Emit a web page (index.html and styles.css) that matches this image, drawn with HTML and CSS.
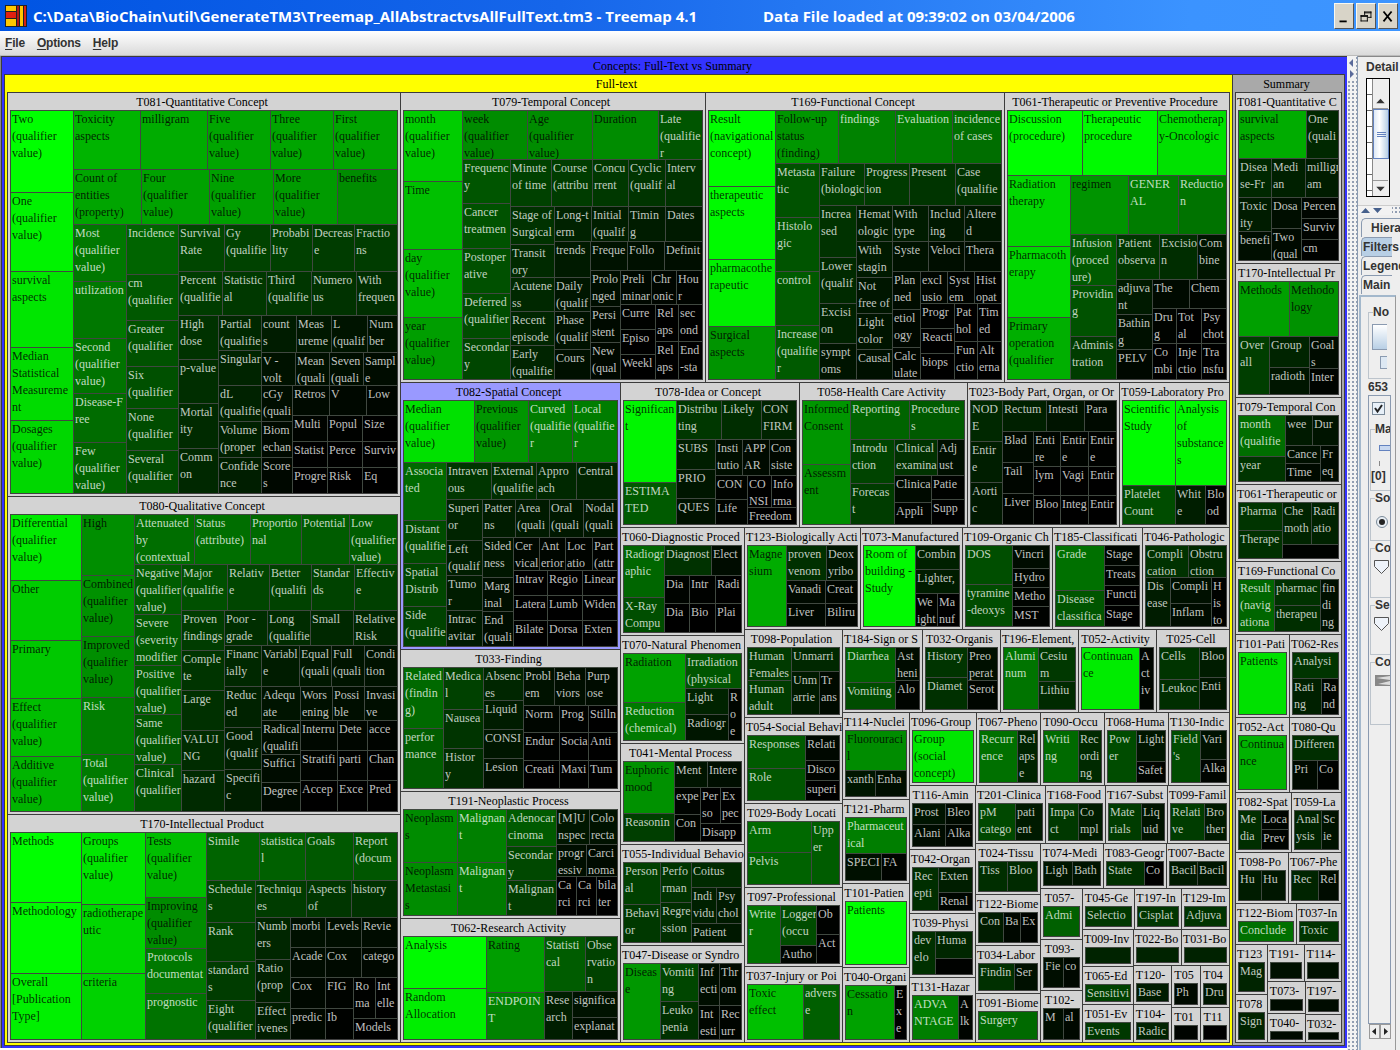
FILE: index.html
```html
<!DOCTYPE html>
<html lang="en">
<head>
<meta charset="utf-8">
<title>Treemap 4.1</title>
<link rel="stylesheet" href="styles.css">
</head>
<body>
<header class="titlebar">
  <svg class="logo" width="22" height="22" viewBox="0 0 22 22">
    <rect width="22" height="22" fill="#222"/>
    <rect x="1" y="1" width="10" height="5" fill="#ffc800"/><rect x="1" y="7" width="10" height="6" fill="#e02010"/><rect x="1" y="14" width="10" height="7" fill="#ffc800"/>
    <rect x="12" y="1" width="2" height="20" fill="#b01818"/>
    <rect x="15" y="1" width="3" height="20" fill="#ffc800"/><rect x="19" y="1" width="2" height="20" fill="#d82010"/>
  </svg>
  <span class="path">C:\Data\BioChain\util\GenerateTM3\Treemap_AllAbstractvsAllFullText.tm3 - Treemap 4.1</span>
  <span class="loaded">Data File loaded at 09:39:02 on 03/04/2006</span>
  <div class="winbtns">
    <svg width="20" height="26" viewBox="0 0 20 26"><path d="M5 19h8" stroke="#000" stroke-width="2"/></svg>
    <svg width="20" height="26" viewBox="0 0 20 26"><path d="M8 8.500h8M8 9.500h8M8.500 8v4M15.500 8v7M12 14.500h4M4 12.500h8M4 13.500h8M4.500 12v7M11.500 12v7M4 18.500h8" stroke="#000" fill="none"/></svg>
    <svg width="20" height="26" viewBox="0 0 20 26"><path d="M5 8l9 11M14 8l-9 11" stroke="#000" stroke-width="2"/></svg>
  </div>
</header>
<nav class="menubar"><span><u>F</u>ile</span><span><u>O</u>ptions</span><span><u>H</u>elp</span></nav>
<main class="workspace">
  <div class="treemap" id="treemap"></div>
  <div class="divider">
    <svg width="9" height="24" viewBox="0 0 9 24"><path d="M6 2v8L2 6zM3 13v8l4-4z" fill="#5a6a9a"/></svg>
  </div>
  <aside class="side">
    <section class="details">
      <div class="label">Detail</div>
      <div class="table">
        <div class="rows"><i></i><i></i><i></i><i></i><i></i><i></i><i></i></div>
        <div class="vscroll">
          <svg width="15" height="15" viewBox="0 0 15 15"><path d="M3 10h9L7.500 5z" fill="#333"/></svg>
          <div class="thumb"><i></i><i></i><i></i></div>
          <div class="track"></div>
          <svg class="down" width="15" height="16" viewBox="0 0 15 16"><path d="M3 6h9l-4.500 5z" fill="#333"/></svg>
        </div>
      </div>
    </section>
    <div class="hdivider"><svg width="34" height="9" viewBox="0 0 34 9"><path d="M3 7h9L7.500 2zM15 2h9l-4.500 5z" fill="#46608c"/></svg></div>
    <div class="tabs">
      <div class="tab t1">Hiera</div><div class="tab on">Filters</div><div class="tab">Legend</div><div class="tab">Main</div>
    </div>
    <section class="filters">
      <fieldset class="f-no"><legend>No</legend><div class="bigbox"></div><div class="smallbox"></div></fieldset>
      <div class="count">653</div>
      <div class="pane">
        <svg class="check" width="13" height="13" viewBox="0 0 13 13"><rect x=".5" y=".5" width="12" height="12" fill="#e8f0f8" stroke="#7a8a99"/><path d="M3 6l2.500 3.500L10 3" fill="none" stroke="#222" stroke-width="2"/></svg>
        <fieldset class="f-ma"><legend>Ma</legend><div class="slider"></div><div class="tick"></div><b>[0]</b></fieldset>
        <fieldset class="f-so"><legend>So</legend><svg width="14" height="14" viewBox="0 0 14 14"><circle cx="7" cy="7" r="5.500" fill="#e8eef4" stroke="#7a8a99"/><circle cx="7" cy="7" r="3" fill="#222"/></svg></fieldset>
        <fieldset class="f-co"><legend>Co</legend><svg width="17" height="16" viewBox="0 0 17 16"><path d="M1.500 1.500h14v6l-7 7-7-7z" fill="#eef3fa" stroke="#555"/></svg></fieldset>
        <fieldset class="f-co"><legend>Se</legend><svg width="17" height="16" viewBox="0 0 17 16"><path d="M1.500 1.500h14v6l-7 7-7-7z" fill="#eef3fa" stroke="#555"/></svg></fieldset>
        <fieldset class="f-last"><legend>Co</legend><svg width="15" height="12" viewBox="0 0 15 12"><rect width="15" height="11" fill="#888"/><path d="M1 3l14-2v4zM3 9l12-3v4z" fill="#ddd"/></svg></fieldset>
      </div>
      <div class="hscroll">
        <svg width="11" height="15" viewBox="0 0 11 15"><rect x=".5" y=".5" width="10" height="14" fill="#eee" stroke="#999"/><path d="M7 4v7L3 7.500z" fill="#222"/></svg>
        <svg width="11" height="15" viewBox="0 0 11 15"><rect x=".5" y=".5" width="10" height="14" fill="#eee" stroke="#999"/><path d="M4 4v7l4-3.500z" fill="#222"/></svg>
      </div>
    </section>
  </aside>
</main>
<script src="treemap.js"></script>
</body>
</html>
```
FILE: styles.css
```css
* { box-sizing: border-box; }
body { margin: 0; width: 1400px; height: 1050px; overflow: hidden; background: #fff; display: flex; flex-direction: column; font: bold 12px/16px "Liberation Sans", sans-serif; color: #333; }

.titlebar { height: 31px; flex: none; display: flex; align-items: center; padding-left: 5px; background: linear-gradient(90deg, #0054e3, #1666ea 40%, #3b93ff 85%, #3d95ff); color: #fff; font: 700 15px/30px "Open Sans", sans-serif; white-space: pre; }
.logo { flex: none; margin-right: 6px; }
.path { width: 730px; flex: none; }
.loaded { flex: 1; }
.winbtns { display: flex; gap: 2px; margin-right: 2px; }
.winbtns svg { background: #d8d4c8; border: 1px solid #f8f8f0; border-right-color: #555; border-bottom-color: #555; }

.menubar { height: 25px; flex: none; display: flex; gap: 12px; padding: 4px 0 0 5px; background: linear-gradient(#fff, #dadada); border-bottom: 1px solid #bbb; letter-spacing: -.2px; }
.menubar u { text-underline-offset: 2px; }

.workspace { flex: 1; display: flex; min-height: 0; }

.treemap { width: 1347px; height: 992px; flex: none; padding-left: 1px; display: flex; background: #888; font: 12px/17px "Liberation Serif", serif; color: #000; }
.split { display: flex; min-width: 0; min-height: 0; overflow: hidden; }
.row { flex-direction: row; }
.col { flex-direction: column; }
.group { min-width: 0; min-height: 0; overflow: hidden; display: flex; flex-direction: column; border: solid #3c3c3c; border-width: 1px 0 0 1px; padding: 0 2px 2px 2px; background: #d3d3d3; }
.group.root { background: #3333ff; }
.group.yellow { background: #ffff00; }
.group.gray { background: #a9a9a9; }
.group.selected { background: #9999ff; }
.title { height: 17px; flex: none; margin: 0 -2px; padding: 1px 5px 0 1px; display: flex; overflow: hidden; white-space: pre; }
.title span { margin: 0 auto; }
.body { flex: 1; border: solid #404040; border-width: 0 1px 1px 0; }
.cell { min-width: 0; min-height: 0; overflow: hidden; padding: 0 0 0 1px; border: solid #404840; border-width: 1px 0 0 1px; white-space: pre; color: rgba(0, 0, 0, .82); }
.cell.lit { color: rgba(255, 255, 255, .76); }

.divider { width: 10px; flex: none; padding-top: 1px; background: radial-gradient(circle, #8f9bb0 .7px, transparent 1px) 0 0 / 4px 4px, #f2f2f2; }
.divider svg { display: block; background: #f2f2f2; }

.side { flex: 1; min-width: 0; display: flex; flex-direction: column; background: #eee; border-left: 1px solid #8a9ab0; overflow: hidden; }
.details { height: 149px; flex: none; padding: 2px 0 0 8px; border-top: 1px solid #888; }
.label { white-space: pre; margin-bottom: 3px; }
.table { width: 24px; height: 119px; display: flex; border: 1px solid #000; background: #fff; }
.rows { width: 5px; padding-top: 15px; display: flex; flex-direction: column; gap: 15px; }
.rows i { height: 1px; background: #666; }
.vscroll { flex: 1; display: flex; flex-direction: column; padding-top: 15px; border-left: 1px solid #888; background: #eee; }
.vscroll svg { flex: none; border-bottom: 1px solid #999; }
.vscroll .down { border-top: 1px solid #999; border-bottom: 0; }
.thumb { height: 50px; display: flex; flex-direction: column; justify-content: center; align-items: center; gap: 1px; border: 1px solid #6382bf; background: linear-gradient(90deg, #dde8f5, #fff 40%, #b8cfe5); }
.thumb i { width: 9px; height: 1px; background: #6382bf; }
.track { flex: 1; }
.hdivider { height: 10px; flex: none; background: radial-gradient(circle, #8f9bb0 .7px, transparent 1px) 0 0 / 4px 4px, #f2f2f2; border-top: 1px solid #ccc; }
.hdivider svg { display: block; background: #f2f2f2; }

.tabs { height: 80px; flex: none; padding: 3px 0 0 3px; display: flex; flex-direction: column; }
.tab { height: 19px; width: 31px; padding: 1px 0 0 1px; border: 1px solid #8a9ab0; border-right: 0; border-bottom: 0; border-radius: 5px 0 0 0; white-space: pre; }
.tab.on { background: #b8cfe5; }
.tab.t1 { width: 40px; padding-left: 9px; }

.filters { flex: 1; margin-left: 1px; padding: 8px 0 0 7px; width: 37px; border: 2px solid #a3b8cc; border-right: 1px solid #999; border-bottom: 0; display: flex; flex-direction: column; overflow: hidden; }
fieldset { min-width: 0; width: 23px; margin: 0; padding: 0; border: 1px solid #bcc4cc; border-right: 0; overflow: hidden; }
legend { margin-left: 4px; padding: 0; line-height: 14px; height: 14px; width: 18px; overflow: hidden; }
.f-no { height: 74px; flex: none; }
.bigbox { width: 15px; height: 26px; margin: 5px 0 6px 3px; border: 1px solid #8a9ab0; border-right: 0; background: linear-gradient(#fff, #b8cfe5); }
.smallbox { width: 7px; height: 13px; margin-left: 11px; border: 1px solid #8a9ab0; border-right: 0; background: #dde8f3; }
.count { height: 16px; flex: none; line-height: 16px; }
.pane { width: 23px; flex: 1; padding: 6px 0 0; border: 1px solid #8a9ab0; overflow: hidden; }
.pane fieldset { width: 21px; margin-left: 1px; }
.check { display: block; margin: 0 0 7px 3px; }
.f-ma { height: 69px; }
.slider { height: 6px; margin: 9px 0 10px 8px; border: 1px solid #6382bf; background: #c8d8f0; }
.tick { width: 1px; height: 5px; margin: 0 0 2px 8px; background: #888; }
.f-ma b { display: block; }
.f-so { height: 50px; }
.f-so svg { display: block; margin: 10px 0 0 4px; }
.f-co { height: 57px; }
.f-co svg { display: block; margin: 4px 0 0 2px; }
.f-last { height: 70px; }
.f-last svg { display: block; margin: 6px 0 0 4px; }
.hscroll { height: 26px; flex: none; display: flex; margin-left: 1px; }
.hscroll svg { flex: none; }
```
FILE: treemap.js
```js
// A leaf is "size green label"; "/" breaks the label into lines.
// A split is [size, ...children] and lays its children out across its parent's axis.
// Size 0 takes the remaining space.
function g(size, title, dir, ...kids) { return { size, title, dir, kids }; }
function styled(cls, node) { node.cls = cls; return node; }

// Each level holds strips; the next level fills what the strips leave free.
function spiral(...levels) {
  return levels.reduceRight((inner, level) => inner ? [0, ...level, inner] : [0, ...level], null);
}
function deep(size, title, dir, ...levels) {
  return g(size, title, dir, ...spiral(...levels).slice(1));
}

const T081 = deep(404, 'T081-Quantitative Concept', 'row',
  [[63, '82 255 Two/(qualifier/value)', '79 243 One/(qualifier/value)', '76 230 survival/aspects', '73 220 Median/Statistical/Measureme/nt', '0 215 Dosages/(qualifier/value)']],
  [[59, '67 180 Toxicity/aspects', '67 172 milligram', '63 165 Five/(qualifier/value)', '63 165 Three/(qualifier/value)', '0 165 First/(qualifier/value)'],
   [55, '68 165 Count of/entities/(property)', '68 162 Four/(qualifier/value)', '64 160 Nine/(qualifier/value)', '64 155 More/(qualifier/value)', '0 140 benefits']],
  [[53, '57 120 Most/(qualifier/value)', '57 120 utilization', '55 115 Second/(qualifier/value)', '49 108 Disease-F/ree', '0 100 Few/(qualifier/value)'],
   [52, '50 100 Incidence', '46 88 cm/(qualifier', '46 82 Greater/(qualifier', '42 80 Six/(qualifier', '42 76 None/(qualifier', '0 74 Several/(qualifier']],
  [[47, '46 70 Survival/Rate', '46 66 Gy/(qualifie', '42 64 Probabi/lity', '42 60 Decreas/e', '0 60 Fractio/ns'],
   [44, '44 60 Percent/(qualifie', '44 56 Statistic/al', '45 54 Third/(qualifie', '45 50 Numero/us', '0 46 With/frequen']],
  [[40, '44 50 High/dose', '44 46 p-value', '45 42 Mortal/ity', '0 40 Comm/on'],
   [43, '35 40 Partial/(qualifie', '35 36 Singular', '36 34 dL/(qualifie', '36 32 Volume/(proper', '0 30 Confide/nce']],
  [[37, '35 28 count/s', '35 24 Meas/ureme', '36 20 L/(qualif', '0 18 Num/ber'],
   [33, '34 18 V -/volt', '34 16 Mean/(quali', '34 14 Seven/(quali', '0 12 Sampl/e']],
  [[31, '36 14 cGy/(quali', '36 10 Biom/echan', '0 8 Score/s']],
  [[30, '37 10 Retros', '37 8 V', '0 6 Low'],
   [26, '35 4 Multi', '35 2 Popul', '0 0 Size'],
   [26, '35 0 Statist', '35 0 Perce', '0 0 Surviv'],
   [0, '35 0 Progre', '35 0 Risk', '0 0 Eq']]);

const T080 = deep(318, 'T080-Qualitative Concept', 'row',
  [[71, '66 235 Differential/(qualifier/value)', '60 205 Other', '58 200 Primary', '58 190 Effect/(qualifier/value)', '0 180 Additive/(qualifier/value)'],
   [53, '61 142 High', '61 145 Combined/(qualifier/value)', '61 142 Improved/(qualifier/value)', '57 126 Risk', '0 122 Total/(qualifier/value)']],
  [[50, '60 110 Attenuated/by/(contextual', '56 110 Status/(attribute)', '51 105 Proportio/nal', '48 92 Potential', '0 92 Low/(qualifier/value)']],
  [[47, '50 92 Negative/(qualifier/value)', '51 90 Severe/(severity/modifier', '49 90 Positive/(qualifier/value)', '50 86 Same/(qualifier/value)', '0 80 Clinical/(qualifier']],
  [[46, '46 80 Major/(qualifie', '42 70 Relativ/e', '42 66 Better/(qualifi', '43 66 Standar/ds', '0 64 Effectiv/e']],
  [[43, '40 60 Proven/findings', '40 52 Comple/te', '40 48 Large', '40 44 VALUI/NG', '0 42 hazard']],
  [[35, '43 46 Poor -/grade', '43 44 Long/(qualifie', '43 40 Small', '0 38 Relative/Risk']],
  [[37, '41 40 Financ/ially', '41 34 Reduc/ed', '42 32 Good/(qualif', '0 30 Specifi/c']],
  [[41, '38 28 Variabl/e', '32 24 Equal/(quali', '33 20 Full/(quali', '0 18 Condi/tion'],
   [34, '39 20 Adequ/ate', '32 16 Wors/ening', '32 14 Possi/ble', '0 14 Invasi/ve']],
  [[39, '34 14 Radical/(qualifi', '28 12 Suffici', '0 10 Degree']],
  [[30, '37 8 Interru', '30 6 Dete', '0 4 acce'],
   [30, '37 4 Stratifi', '30 2 parti', '0 0 Chan'],
   [0, '37 0 Accep', '30 0 Exce', '0 0 Pred']]);

const T170 = deep(0, 'T170-Intellectual Product', 'row',
  [[71, '70 255 Methods', '71 250 Methodology', '0 240 Overall/[Publication/Type]'],
   [64, '72 230 Groups/(qualifier/value)', '69 215 radiotherape/utic', '0 210 criteria'],
   [61, '65 190 Tests/(qualifier/value)', '51 140 Improving/(qualifier/value)', '45 120 Protocols/documentat', '0 115 prognostic']],
  [[48, '53 100 Simile', '46 96 statistica/l', '48 88 Goals', '0 86 Report/(docum']],
  [[49, '42 70 Schedule/s', '39 65 Rank', '39 60 standard/s', '0 60 Eight/(qualifier']],
  [[37, '51 60 Techniqu/es', '45 54 Aspects/of', '0 50 history']],
  [[35, '42 38 Numb/ers', '43 32 Ratio/(prop', '0 30 Effect/ivenes']],
  [[30, '35 16 morbi', '36 14 Levels', '0 12 Revie'],
   [30, '35 12 Acade', '36 10 Cox', '0 8 catego']],
  [[35, '31 8 Cox', '0 8 predic'],
   [28, '31 4 FIG', '0 2 Ib']],
  [[41, '22 2 Ro/ma', '0 0 Int/elle'], '0 0 Models']);

const T079 = deep(305, 'T079-Temporal Concept', 'row',
  [[59, '71 205 month/(qualifier/value)', '68 192 Time', '68 188 day/(qualifier/value)', '0 158 year/(qualifier/value)']],
  [[49, '65 140 week/(qualifier/value)', '65 140 Age/(qualifier/value)', '66 140 Duration', '0 85 Late/(qualifie/r']],
  [[48, '44 85 Frequenc/y', '45 82 Cancer/treatmen', '45 80 Postoper/ative', '45 76 Deferred/(qualifier', '0 70 Secondar/y']],
  [[47, '41 65 Minute/of time', '41 60 Course/(attribu', '36 56 Concu/rrent', '37 52 Cyclic/(qualif', '0 50 Interv/al']],
  [[44, '38 50 Stage of/Surgical', '33 42 Transit/ory', '34 40 Acutene/ss', '34 38 Recent/episode', '0 36 Early/(qualifie']],
  [[35, '37 34 Long-t/erm', '37 30 Initial/(qualif', '37 28 Timin/g', '0 26 Dates']],
  [[36, '36 26 trends', '34 22 Daily/(qualif', '38 18 Phase/(qualif', '0 16 Cours']],
  [[29, '37 18 Freque', '37 16 Follo', '0 14 Definit']],
  [[30, '36 14 Prolo/nged', '36 10 Persi/stent', '0 8 New/(qual']],
  [[34, '31 8 Preli/minar', '25 6 Chr/onic', '0 4 Hou/r']],
  [[35, '25 2 Curre', '25 0 Episo', '0 0 Weekl'],
   [23, '37 0 Rel/aps', '0 0 Rel/aps'],
   [0, '37 0 sec/ond', '0 0 End/-sta']]);

const T169 = deep(299, 'T169-Functional Concept', 'row',
  [[67, '76 255 Result/(navigational/concept)', '73 250 therapeutic/aspects', '67 240 pharmacothe/rapeutic', '0 148 Surgical/aspects']],
  [[53, '63 150 Follow-up/status/(finding)', '57 130 findings', '57 125 Evaluation', '0 110 incidence/of cases']],
  [[44, '54 82 Metasta/tic', '54 84 Histolo/gic', '54 90 control', '0 90 Increase/(qualifie/r']],
  [[42, '45 62 Failure/(biologic', '45 58 Progress/ion', '46 52 Present', '0 50 Case/(qualifie']],
  [[37, '52 50 Increa/sed', '46 42 Lower/(qualif', '40 34 Excisi/on', '0 20 sympt/oms'],
   [36, '36 30 Hemat/ologic', '36 26 With/stagin', '36 22 Not/free of', '36 20 Light/color', '0 16 Causal']],
  [[36, '36 28 With/type', '36 24 Includ/ing', '0 22 Altere/d'],
   [30, '36 18 Syste', '36 14 Veloci', '0 12 Thera']],
  [[28, '38 12 Plan/ned', '38 8 etiol/ogy', '0 6 Calc/ulate']],
  [[32, '27 6 excl/usio', '27 4 Syst/em', '0 2 Hist/opat']],
  [[34, '25 2 Progr', '25 0 Reacti', '0 0 biops'],
   [23, '38 0 Pat/hol', '0 0 Fun/ctio'],
   [0, '38 0 Tim/ed', '0 0 Alt/erna']]);

const T061 = deep(0, 'T061-Therapeutic or Preventive Procedure', 'col',
  [[65, '75 255 Discussion/(procedure)', '75 250 Therapeutic/procedure', '0 225 Chemotherap/y-Oncologic']],
  [[63, '71 216 Radiation/therapy', '71 216 Pharmacoth/erapy', '0 175 Primary/operation/(qualifier']],
  [[59, '58 148 regimen', '50 125 GENER/AL', '0 115 Reductio/n']],
  [[46, '51 90 Infusion/(proced/ure)', '51 82 Providin/g', '0 60 Adminis/tration']],
  [[45, '43 55 Patient/observa', '38 45 Excisio/n', '0 20 Com/bine']],
  [[36, '35 26 adjuva/nt', '35 16 Bathin/g', '0 8 PELV']],
  [[29, '37 10 The', '0 6 Chem'],
   [35, '24 4 Dru/g', '25 0 Tot/al', '0 0 Psy/chot'],
   [0, '24 0 Co/mbi', '25 0 Inje/ctio', '0 0 Tra/nsfu']]);

const T082 = styled('selected', deep(267, 'T082-Spatial Concept', 'col',
  [[62, '71 225 Median/(qualifier/value)', '54 150 Previous/(qualifier/value)', '44 125 Curved/(qualifie/r', '0 125 Local/(qualifie/r']],
  [[43, '58 105 Associa/ted', '43 76 Distant/(qualifie', '43 70 Spatial/Distrib', '0 66 Side/(qualifie']],
  [[37, '45 54 Intraven/ous', '45 46 External/(qualifie', '40 40 Appro/ach', '0 36 Central']],
  [[36, '41 36 Superi/or', '35 30 Left/(qualif', '35 28 Tumo/r', '0 26 Intrac/avitar']],
  [[38, '33 28 Patter/ns', '34 26 Area/(quali', '34 24 Oral/(quali', '0 22 Nodal/(quali']],
  [[31, '40 22 Sided/ness', '34 14 Marg/inal', '0 12 End/(quali']],
  [[33, '26 8 Cer/vical', '26 6 Ant/erior', '27 4 Loc/atio', '0 2 Part/(attr'],
   [25, '34 0 Intrav', '35 0 Regio', '0 0 Linear'],
   [25, '34 0 Latera', '35 0 Lumb', '0 0 Widen'],
   [0, '34 0 Bilate', '35 0 Dorsa', '0 0 Exten']]));

const T033 = deep(142, 'T033-Finding', 'row',
  [[40, '61 105 Related/(findin/g)', '0 92 perfor/mance'],
   [40, '42 65 Medica/l', '39 52 Nausea', '0 46 Histor/y'],
   [40, '33 38 Absenc/es', '29 28 Liquid', '29 22 CONSI', '0 18 Lesion']],
  [[38, '31 18 Probl/em', '31 14 Beha/viors', '0 12 Purp/ose'],
   [27, '36 6 Norm', '29 2 Prog', '0 0 Stilln'],
   [28, '36 2 Endur', '29 0 Socia', '0 0 Anti'],
   [0, '36 0 Creati', '29 0 Maxi', '0 0 Tum']]);

const T191 = deep(127, 'T191-Neoplastic Process', 'row',
  [[54, '53 140 Neoplasm/s', '0 140 Neoplasm/Metastasi/s'],
   [49, '53 128 Malignan/t', '0 122 Malignan/t'],
   [50, '37 90 Adenocar/cinoma', '34 72 Secondar/y', '0 62 Malignan/t']],
  [[35, '33 22 [M]U/nspec', '0 18 Colo/recta'],
   [32, '30 14 progr/essiv', '0 10 Carci/noma'],
   [0, '20 0 Ca/rci', '20 0 Ca/rci', '0 0 bila/ter']]);

const T062 = deep(0, 'T062-Research Activity', 'row',
  [[83, '52 250 Analysis', '0 238 Random/Allocation'],
   [58, '56 158 Rating', '0 130 ENDPOIN/T']],
  [[55, '41 92 Statisti/cal', '0 65 Obse/rvatio/n']],
  ['28 30 Rese/arch'],
  ['26 18 significa', '0 14 explanat']);

const T078 = deep(179, 'T078-Idea or Concept', 'row',
  [[53, '82 245 Significan/t', '0 90 ESTIMA/TED']],
  [[39, '45 55 Distribu/ting', '40 45 Likely', '0 35 CON/FIRM']],
  [[39, '30 30 SUBS', '29 22 PRIO', '0 18 QUES']],
  [[36, '27 14 Insti/tutio', '27 10 APP/AR', '0 8 Con/siste']],
  [[32, '24 4 CON', '0 4 Life']],
  [[32, '24 0 CO/NSI', '0 0 Info/rma'], '0 0 Freedom']);

const T058 = deep(168, 'T058-Health Care Activity', 'row',
  [[48, '64 150 Informed/Consent', '0 142 Assessm/ent']],
  [[39, '59 100 Reporting', '0 90 Procedure/s']],
  [[44, '44 68 Introdu/ction', '0 60 Forecas/t']],
  [[36, '43 50 Clinical/examina', '0 15 Adj/ust']],
  [[37, '27 10 Clinica', '0 4 Appli'], [0, '24 2 Patie', '0 0 Supp']]);

const T023 = deep(152, 'T023-Body Part, Organ, or Or', 'row',
  [[32, '41 40 NOD/E', '41 30 Entir/e', '0 24 Aorti/c']],
  [[31, '44 32 Rectum', '38 20 Intesti', '0 10 Para']],
  [[31, '31 10 Blad', '31 6 Tail', '0 4 Liver']],
  [[35, '27 6 Enti/re', '28 4 Entir/e', '0 2 Entir/e'],
   [29, '27 0 lym', '28 0 Vagi', '0 0 Entir'],
   [0, '27 0 Bloo', '28 0 Integ', '0 0 Entir']]);

const T059 = g(0, 'T059-Laboratory Pro', 'col',
  [85, '53 252 Scientific/Study', '0 248 Analysis/of/substance/s'],
  [0, '53 76 Platelet/Count', '30 30 Whit/e', '0 3 Blo/od']);

const diagnostics = [124,
  deep(108, 'T060-Diagnostic Proced', 'row',
    [[41, '52 102 Radiogr/aphic', '0 78 X-Ray/Compu']],
    [[30, '47 50 Diagnost', '0 12 Elect'], [28, '25 4 Dia', '26 2 Intr', '0 0 Radi'], [0, '25 0 Dia', '26 0 Bio', '0 0 Plai']]),
  deep(108, 'T070-Natural Phenomen', 'row',
    [[62, '49 162 Radiation', '0 122 Reduction/(chemical)']],
    ['35 85 Irradiation/(physical'],
    [[43, '26 35 Light', '0 22 Radiogr'], '0 5 R/o/e']),
  deep(101, 'T041-Mental Process', 'row',
    [[51, '52 145 Euphoric/mood', '0 62 Reasonin']],
    [[26, '33 20 Ment', '0 14 Intere']],
    [[26, '27 4 expe', '0 4 Con']],
    [[36, '20 0 Per/so', '0 0 Ex/pec'], '0 0 Disapp']),
  deep(101, 'T055-Individual Behavio', 'row',
    [[37, '42 64 Person/al', '0 56 Behavi/or'], [31, '40 52 Perfo/rman', '0 46 Regre/ssion']],
    ['25 42 Coitus', [36, '25 32 Indi/vidu', '0 26 Psy/chol'], '0 24 Patient']),
  g(0, 'T047-Disease or Syndro', 'row', '37 152 Diseas/e', [38, '38 70 Vomiti/ng', '0 48 Leuko/penia'], [21, '42 14 Inf/ecti', '0 6 Int/esti'], [0, '42 10 Thr/om', '0 4 Rec/urr'])
];

const chemicals = [102,
  deep(116, 'T123-Biologically Acti', 'row',
    ['39 172 Magne/sium'],
    [[35, '40 48 proven/venom', '0 22 Deox/yribo'], [23, '39 10 Vanadi', '0 6 Creat'], [0, '39 8 Liver', '0 4 Biliru']]),
  deep(102, 'T073-Manufactured', 'row',
    ['52 250 Room of/building -/Study'],
    ['24 32 Combin', '24 28 Lighter,', [0, '22 4 We/ight', '0 0 Ma/nuf']]),
  g(90, 'T109-Organic Ch', 'row', [47, '39 78 DOS', '0 76 tyramine/-deoxys'], [0, '23 12 Vincri', '19 6 Hydro', '19 4 Metho', '0 2 MST']),
  g(90, 'T185-Classificati', 'row', [49, '45 112 Grade', '0 85 Disease/classifica'], [0, '20 6 Stage', '20 4 Treats', '20 0 Functi', '0 0 Stage']),
  deep(0, 'T046-Pathologic', 'col',
    [[32, '43 50 Compli/cation', '0 40 Obstru/ction']],
    ['25 28 Dis/ease', [41, '26 16 Compli', '0 12 Inflam'], '0 2 H/is/to'])
];

const social = [98,
  deep(88, 'T098-Population', 'row', [[44, '33 58 Human/Females', '0 60 Human/adult']], ['24 40 Unmarri'], ['28 26 Unm/arrie', '0 10 Tr/ans']),
  g(86, 'T054-Social Behavi', 'row', [58, '33 90 Responses', '0 86 Role'], [0, '25 8 Relati', '20 4 Disco', '0 0 superi']),
  g(84, 'T029-Body Locati', 'row', [64, '31 105 Arm', '0 98 Pelvis'], '0 92 Upp/er'),
  g(79, 'T097-Professional', 'row', '33 115 Write/r', [36, '40 76 Logger/(occu', '0 6 Autho'], [0, '29 2 Ob', '0 0 Act']),
  g(0, 'T037-Injury or Poi', 'row', '56 192 Toxic/effect', '0 95 advers/e')
];

const organisms = [83,
  g(80, 'T184-Sign or S', 'row', [50, '35 96 Diarrhea', '0 76 Vomiting'], [0, '33 12 Ast/heni', '0 4 Alo']),
  g(78, 'T032-Organis', 'row', [42, '30 52 History', '0 48 Diamet'], [0, '33 16 Preo/perat', '0 6 Serot']),
  g(78, 'T196-Element,', 'row', '35 116 Alumi/num', [0, '34 56 Cesiu/m', '0 42 Lithiu']),
  g(78, 'T052-Activity', 'row', '58 236 Continuan/ce', '0 5 A/ct/iv'),
  g(0, 'T025-Cell', 'row', [40, '32 52 Cells', '0 46 Leukoc'], [0, '30 28 Bloo', '0 22 Enti'])
];

const treatments = [67,
  g(87, 'T114-Nuclei', 'col', '40 140 Fluorouraci/l', [0, '30 22 xanth', '0 14 Enha']),
  g(84, 'T121-Pharm', 'col', '36 126 Pharmaceut/ical', [0, '36 16 SPECI', '0 4 FA']),
  g(84, 'T101-Patien', 'row', '0 255 Patients'),
  g(0, 'T040-Organi', 'row', '49 162 Cessatio/n', '0 0 E/x/e')
];

const occupations = [73,
  g(67, 'T096-Group', 'row', '0 230 Group/(social/concept)'),
  g(64, 'T067-Pheno', 'row', '38 112 Recurr/ence', '0 35 Rel/aps/e'),
  g(64, 'T090-Occu', 'row', '35 106 Writi/ng', '0 42 Rec/ordi/ng'),
  g(64, 'T068-Huma', 'row', '29 76 Pow/er', [0, '31 22 Light', '0 4 Safet']),
  g(0, 'T130-Indic', 'row', '29 76 Field/\'s', [0, '29 18 Vari', '0 4 Alka'])
];

const functions = [66,
  g(64, 'T116-Amin', 'col', [21, '33 20 Prost', '0 10 Bleo'], [0, '33 12 Alani', '0 6 Alka']),
  g(64, 'T042-Organ', 'row', '26 46 Rec/epti', [0, '25 30 Exten', '0 6 Renal']),
  g(64, 'T039-Physi', 'row', '23 48 dev/elo', [0, '27 38 Huma', '0 2 ']),
  g(0, 'T131-Hazar', 'row', '46 126 ADVA/NTAGE', '0 5 A/lk')
];

const clinical = [58,
  g(70, 'T201-Clinica', 'row', '37 72 pM/catego', '0 26 pati/ent'),
  g(60, 'T168-Food', 'row', '30 56 Impa/ct', '0 28 Co/mpl'),
  g(62, 'T167-Subst', 'row', '33 60 Mate/rials', '0 20 Liq/uid'),
  g(0, 'T099-Famil', 'row', '34 60 Relati/ve', '0 26 Bro/ther')
];

const tissue = [65,
  g(51, 'T024-Tissu', 'row', '29 46 Tiss', '0 42 Bloo'),
  g(51, 'T122-Biome', 'row', '25 28 Con', '17 8 Ba', '0 4 Ex'),
  g(48, 'T034-Labor', 'row', '36 48 Findin', '0 16 Ser'),
  g(0, 'T091-Biome', 'row', '0 106 Surgery')
];

const devices = [45,
  g(63, 'T074-Medi', 'row', '29 22 Ligh', '0 20 Bath'),
  g(63, 'T083-Geogr', 'row', '38 48 State', '0 0 Co'),
  g(0, 'T007-Bacte', 'row', '28 26 Bacil', '0 22 Bacil')
];

const fields = [42,
  g(51, 'T057-', 'row', '0 96 Admi'),
  g(51, 'T093-', 'row', '20 14 Fie', '0 8 co'),
  g(0, 'T102-', 'row', '20 14 M', '0 8 al')
];

const fullText = styled('yellow', deep(1228, 'Full-text', 'row',
  [[393, T081, T080, T170]],
  [[290, T079, T169, T061]],
  [[220, T082, T033, T191, T062]],
  [[145, T078, T058, T023, T059]],
  [diagnostics],
  [chemicals],
  [social],
  [organisms],
  [treatments],
  [occupations],
  [functions],
  [clinical],
  [tissue],
  [devices],
  [fields],
  [[41, g(52, 'T045-Ge', 'row', '0 56 Selectio'), g(47, 'T197-In', 'row', '0 54 Cisplat'), g(0, 'T129-Im', 'row', '0 52 Adjuva')]],
  [[51, g(37, 'T009-Inv', 'row', '0 35 '), g(38, 'T065-Ed', 'row', '0 66 Sensitivi'), g(0, 'T051-Ev', 'row', '0 56 Events')]],
  [[36, g(48, 'T022-Bo', 'row', '0 35 '), g(0, 'T031-Bo', 'row', '0 34 ')]],
  [[38, g(39, 'T120-', 'row', '0 28 Base'), g(0, 'T104-', 'row', '0 34 Radic')]],
  [[42, g(29, 'T05', 'row', '0 10 Ph'), g(0, 'T04', 'row', '0 22 Dru')],
   [0, g(29, 'T01', 'row', '0 4 '), g(0, 'T11', 'row', '0 0 ')]]));

const summary = styled('gray', deep(0, 'Summary', 'col',
  [
    g(171, 'T081-Quantitative C', 'col',
      [48, '68 172 survival/aspects', '0 40 One/(quali'],
      [39, '33 40 Disea/se-Fr', '34 32 Medi/an', '0 28 milligr/am'],
      [0, [33, '34 28 Toxic/ity', '0 14 benefi'], [30, '31 14 Dosa', '0 10 Two/(qual'], [0, '21 6 Percen', '21 4 Surviv', '0 2 cm']]),
    g(134, 'T170-Intellectual Pr', 'col',
      [55, '51 160 Methods', '0 146 Methodo/logy'],
      [0, '31 62 Over/all', [40, '31 36 Group', '0 22 radioth'], [0, '32 12 Goal/s', '0 4 Inter']]),
    deep(87, 'T079-Temporal Con', 'row',
      [[47, '41 110 month/(qualifie', '0 52 year']],
      [[30, '27 26 wee', '0 20 Dur']],
      [[35, '18 16 Cance', '0 10 Time'], '0 10 Fr/eq']),
    deep(77, 'T061-Therapeutic or', 'row',
      [[44, '28 52 Pharma', '0 48 Therape']],
      [[42, '29 36 Che/moth', '0 34 Radi/atio'], '0 3 ']),
    g(73, 'T169-Functional Co', 'row', '36 102 Result/(navig/ationa', [46, '26 50 pharmac', '0 46 therapeu'], '0 16 fin/di/ng'),
    [83, g(54, 'T101-Pati', 'row', '0 225 Patients'), g(0, 'T062-Res', 'col', '26 52 Analysi', [0, '29 32 Rati/ng', '0 6 Ra/nd'])],
    [75, g(54, 'T052-Act', 'row', '0 178 Continua/nce'), g(0, 'T080-Qu', 'col', '25 46 Differen', [0, '25 10 Pri', '0 2 Co'])],
    [60, g(56, 'T082-Spat', 'row', '23 46 Me/dia', [0, '19 6 Loca', '0 4 Prev']), g(0, 'T059-La', 'row', '27 36 Anal/ysis', '0 18 Sc/ie')],
    [51, g(53, 'T098-Po', 'row', '23 28 Hu', '0 22 Hu'), g(0, 'T067-Phe', 'row', '27 36 Rec', '0 12 Rel')],
    [41, g(61, 'T122-Biom', 'row', '0 112 Conclude'), g(0, 'T037-In', 'row', '0 52 Toxic')]
  ],
  [[32, g(50, 'T123', 'row', '0 36 Mag'), g(0, 'T078', 'row', '0 36 Sign')]],
  [[37, g(37, 'T191-', 'row', '0 16 '), g(0, 'T114-', 'row', '0 16 ')]],
  [[38, g(32, 'T073-', 'row', '0 12 '), g(0, 'T040-', 'row', '0 10 ')],
   [0, g(33, 'T197-', 'row', '0 12 '), g(0, 'T032-', 'row', '0 10 ')]]));

function box(cls, size) {
  const el = document.createElement('div');
  el.className = cls;
  el.style.flex = size ? '0 0 ' + size + 'px' : '1 1 0';
  return el;
}

function render(node, axis) {
  if (typeof node === 'string') {
    const [, size, green, label] = node.match(/^(\d+) (\d+) (.*)$/);
    const el = box(+green < 136 ? 'cell lit' : 'cell', +size);
    el.style.backgroundColor = 'rgb(0,' + green + ',0)';
    el.textContent = label.replace(/\//g, '\n');
    return el;
  }
  if (Array.isArray(node)) {
    const el = box('split ' + axis, node[0]);
    const next = axis === 'row' ? 'col' : 'row';
    node.slice(1).forEach(kid => el.append(render(kid, next)));
    return el;
  }
  const el = box('group ' + (node.cls || ''), node.size);
  const title = document.createElement('div');
  title.className = 'title';
  title.append(document.createElement('span'));
  title.firstChild.textContent = node.title;
  const body = document.createElement('div');
  body.className = 'body split ' + node.dir;
  node.kids.forEach(kid => body.append(render(kid, node.dir === 'row' ? 'col' : 'row')));
  el.append(title, body);
  return el;
}

const root = styled('root', g(0, 'Concepts: Full-Text vs Summary', 'row', fullText, summary));
document.getElementById('treemap').append(render(root, 'row'));
```
